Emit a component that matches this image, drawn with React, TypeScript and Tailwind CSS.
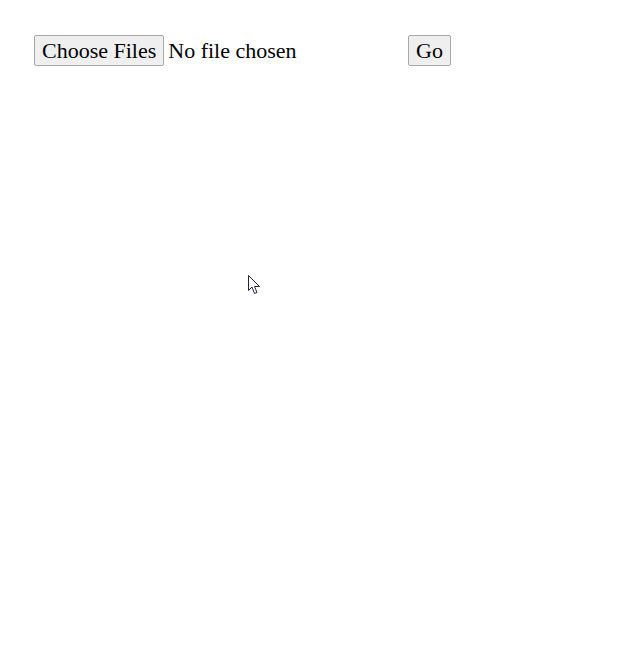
import React from 'react';

export default function App() {
  return (
    <div className="relative w-[628px] h-[646px] bg-white" style={{ fontFamily: '"Liberation Serif", "Times New Roman", serif' }}>
      <form className="flex items-center pt-[35px] pl-[34px]">
        <div className="flex items-center w-[369px]">
          <button type="button" className="h-[31px] px-[7px] border border-[#a9a9a9] bg-[#efefef] text-[22px] leading-none text-black rounded-[2px]">
            Choose Files
          </button>
          <span className="ml-[4px] text-[22px] leading-none text-black">No file chosen</span>
        </div>
        <button type="button" className="ml-[5px] h-[31px] px-[7px] border border-[#a9a9a9] bg-[#efefef] text-[22px] leading-none text-black rounded-[2px]">
          Go
        </button>
      </form>
      <svg className="absolute left-[248px] top-[275px]" width="13" height="20" viewBox="0 0 13 20">
        <path d="M0.5 0.5 L0.5 15.5 L4 12 L6.5 18.5 L9 17.5 L6.5 11.5 L11.5 11.5 Z" fill="white" stroke="#222244" strokeWidth="1" />
      </svg>
    </div>
  );
}
